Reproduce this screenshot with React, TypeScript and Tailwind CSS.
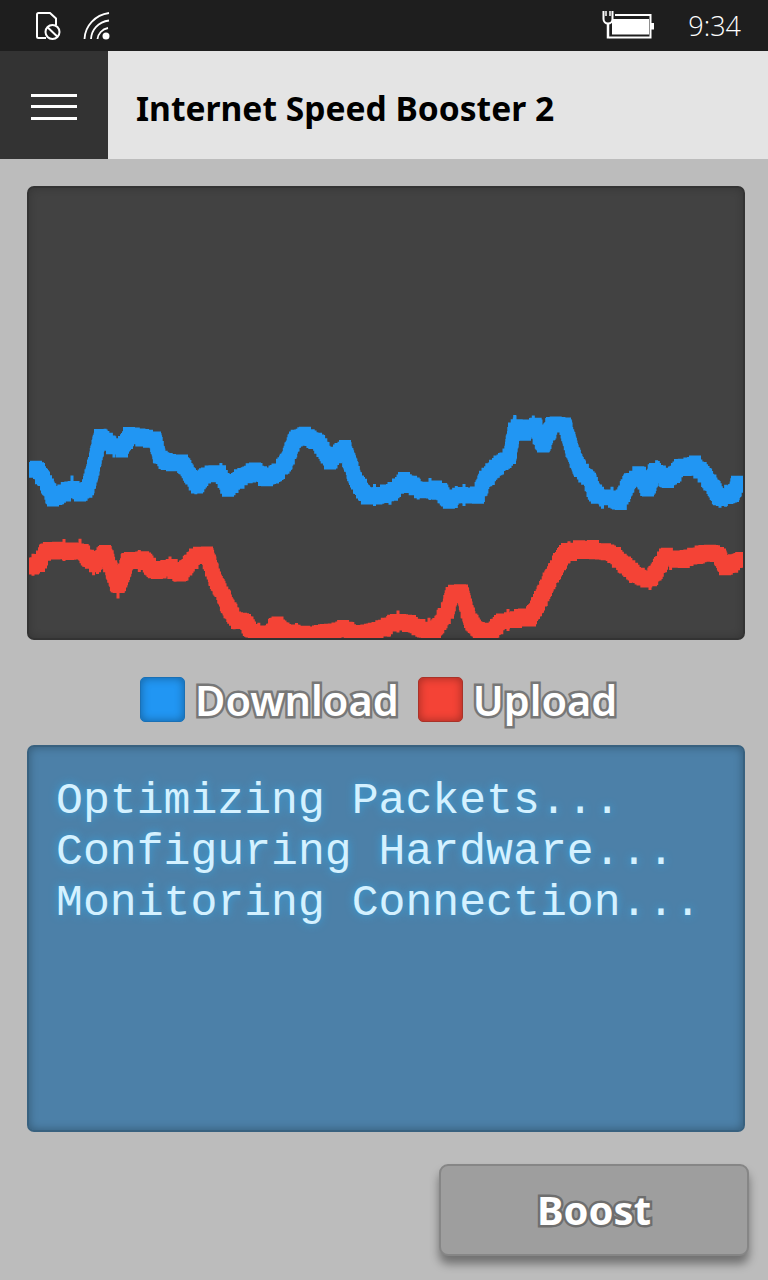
import React from 'react';

type Point = [number, number];

const downloadPoints: Point[] = [
  [30, 470], [38, 470], [47, 485], [53, 498], [65, 492], [72, 488], [80, 494], [88, 488], [95, 460], [100, 437],
  [112, 445], [122, 448], [130, 435], [145, 438], [155, 440], [160, 457], [170, 463], [182, 463], [190, 475], [197, 485],
  [205, 475], [220, 472], [228, 488], [240, 478], [255, 470], [267, 480], [285, 465], [295, 440], [305, 435], [318, 442],
  [330, 460], [345, 448], [355, 478], [365, 495], [384, 495], [392, 492], [404, 481], [420, 490], [440, 490], [447, 500],
  [460, 496], [478, 495], [485, 480], [495, 468], [510, 455], [515, 425], [525, 432], [535, 425], [543, 446], [552, 425],
  [565, 425], [572, 450], [580, 470], [590, 480], [595, 495], [610, 498], [620, 502], [630, 480], [640, 475], [648, 490],
  [655, 470], [668, 480], [680, 468], [695, 465], [705, 475], [720, 498], [733, 495], [737, 484], [743, 484],
];

const uploadPoints: Point[] = [
  [30, 565], [38, 566], [47, 550], [60, 550], [72, 552], [80, 550], [95, 565], [105, 552], [118, 588], [128, 560],
  [145, 560], [155, 572], [170, 567], [180, 575], [195, 556], [207, 554], [215, 580], [225, 600], [235, 620], [245, 622],
  [255, 635], [270, 635], [276, 624], [285, 632], [310, 635], [330, 632], [345, 628], [355, 635], [370, 632], [385, 628],
  [394, 622], [410, 624], [425, 630], [435, 630], [448, 610], [452, 593], [462, 593], [470, 620], [480, 632], [492, 632],
  [500, 622], [520, 618], [530, 618], [540, 600], [552, 575], [565, 552], [585, 549], [605, 551], [615, 556], [625, 565],
  [635, 575], [650, 580], [660, 565], [665, 556], [680, 560], [695, 556], [710, 552], [720, 556], [725, 568], [743, 558],
];

// stamps small blocks along the line with a bit of shake, the app's graph is noisy and blocky
const noisyBlocks = (points: Point[], seed: number) => {
  let rnd = seed;
  const next = () => {
    rnd = (rnd * 9301 + 49297) % 233280;
    return rnd / 233280 - 0.5;
  };
  let d = '';
  for (let i = 0; i < points.length - 1; i++) {
    const [x1, y1] = points[i];
    const [x2, y2] = points[i + 1];
    const len = Math.hypot(x2 - x1, y2 - y1);
    const steps = Math.max(1, Math.round(len / 2));
    for (let s = 0; s < steps; s++) {
      const t = s / steps;
      const cx = Math.max(x1 + (x2 - x1) * t, 33) - 27;
      const cy = y1 + (y2 - y1) * t - 186 + next() * 3;
      const spike = next() > 0.42 ? 4 : 0;
      const w = spike ? 1.500 : 6;
      const h = spike ? 11 : 7.500 + next() * 2;
      d += `M${(cx - w).toFixed(1)} ${(cy - h).toFixed(1)}h${w * 2}v${(h * 2).toFixed(1)}h${-w * 2}z`;
    }
  }
  return d;
};

const StatusIcons = () => (
  <div className="flex items-center gap-[21px]">
    <svg width="26" height="28" viewBox="0 0 26 28" fill="none" stroke="#fff" strokeWidth="2">
      <path d="M10 26H2.500a1.500 1.500 0 0 1-1.500-1.500V2.500A1.500 1.500 0 0 1 2.500 1h11.500l6 5.500V13" />
      <circle cx="16.500" cy="20" r="7" />
      <path d="M11.800 15.500l9.400 9" />
    </svg>
    <svg width="28" height="28" viewBox="0 0 28 28" fill="none" stroke="#fff" strokeWidth="1.800">
      <path d="M1.500 27C2 14 12 3 26 1" />
      <path d="M8 27C8.500 18 15 10 26 8.500" />
      <path d="M14.500 27C15 22 19 17 25 16" />
      <circle cx="23" cy="24" r="3.500" fill="#fff" stroke="none" />
    </svg>
  </div>
);

const BatteryIcon = () => (
  <svg width="52" height="28" viewBox="0 0 52 28" fill="none" className="-mt-[2px]">
    <path d="M1.500 0v8a4.500 4.500 0 0 0 9 0V0" stroke="#fff" strokeWidth="2" />
    <path d="M4 0v5M8 0v5" stroke="#fff" strokeWidth="1.500" />
    <path d="M6 12v15.500" stroke="#fff" strokeWidth="2.500" />
    <path d="M13 4h35.500v22.500H7" stroke="#fff" strokeWidth="2" />
    <rect x="10" y="8" width="37" height="15.500" fill="#fff" />
    <rect x="49" y="12" width="3" height="6.500" fill="#fff" />
  </svg>
);

const App: React.FC = () => {
  return (
    <div className="w-[768px] h-[1280px] overflow-hidden flex flex-col bg-[#bcbcbc] font-['Noto_Sans',sans-serif]">
      <div className="h-[51px] bg-[#1e1e1e] flex items-center pl-[36px] pr-[27px]">
        <StatusIcons />
        <div className="ml-auto flex items-center gap-[34px]">
          <BatteryIcon />
          <span className="text-[27px] leading-none text-white font-['Open_Sans',sans-serif] font-light">9:34</span>
        </div>
      </div>

      <div className="h-[108px] flex bg-[#e4e4e4]">
        <div className="w-[108px] pt-[3px] bg-[#333333] flex flex-col items-center justify-center gap-[8.500px]">
          <div className="w-[46px] h-[3px] bg-white" />
          <div className="w-[46px] h-[3px] bg-white" />
          <div className="w-[46px] h-[3px] bg-white" />
        </div>
        <div className="flex items-center pl-[28px] pt-[6px] text-[33.600px] font-bold text-black">Internet Speed Booster 2</div>
      </div>

      <div className="ml-[27px] mt-[27px] w-[718px] h-[454px] rounded-[7px] bg-[#424242] border-2 border-[#333333] shadow-[inset_0_0_8px_rgba(0,0,0,0.2)] overflow-hidden">
        <svg width="714" height="450" viewBox="2 2 714 450" className="block">
          <path d={noisyBlocks(downloadPoints, 17)} fill="#2196f3" />
          <path d={noisyBlocks(uploadPoints, 91)} fill="#f44336" />
        </svg>
      </div>

      <div className="mt-[37px] h-[45px] pl-[140px] flex items-center">
        <div className="w-[45px] h-[45px] rounded-[5px] bg-[#2196f3] border border-[#1a70b5] shadow-[inset_0_0_10px_rgba(0,0,0,0.35)]" />
        <span className="ml-[10px] mt-[2px] text-[41.500px] leading-none font-semibold text-white [-webkit-text-stroke:5px_#777777] [paint-order:stroke_fill]">Download</span>
        <div className="ml-[19px] w-[45px] h-[45px] rounded-[5px] bg-[#f44336] border border-[#a93228] shadow-[inset_0_0_10px_rgba(0,0,0,0.35)]" />
        <span className="ml-[10px] mt-[2px] text-[41.500px] leading-none font-semibold text-white [-webkit-text-stroke:5px_#777777] [paint-order:stroke_fill]">Upload</span>
      </div>

      <div className="ml-[27px] mt-[23px] w-[718px] h-[387px] rounded-[7px] bg-[#4c80a8] border-2 border-[#38617f] shadow-[inset_0_0_10px_rgba(0,0,0,0.3)] pl-[27px] pt-[29px] font-['Liberation_Mono',monospace] text-[44.800px] leading-[51px] text-[#d4f1ff] [text-shadow:0_0_8px_#36a3e0]">
        <div>Optimizing Packets...</div>
        <div>Configuring Hardware...</div>
        <div>Monitoring Connection...</div>
      </div>

      <div className="ml-[439px] mt-[32px] w-[310px] h-[92px] rounded-[9px] bg-[#9e9e9e] border-2 border-[#868686] shadow-[0_8px_10px_rgba(0,0,0,0.4)] flex items-center justify-center text-[40px] font-bold text-white [-webkit-text-stroke:5px_#6e6e6e] [paint-order:stroke_fill]">
        Boost
      </div>
    </div>
  );
};

export default App;
